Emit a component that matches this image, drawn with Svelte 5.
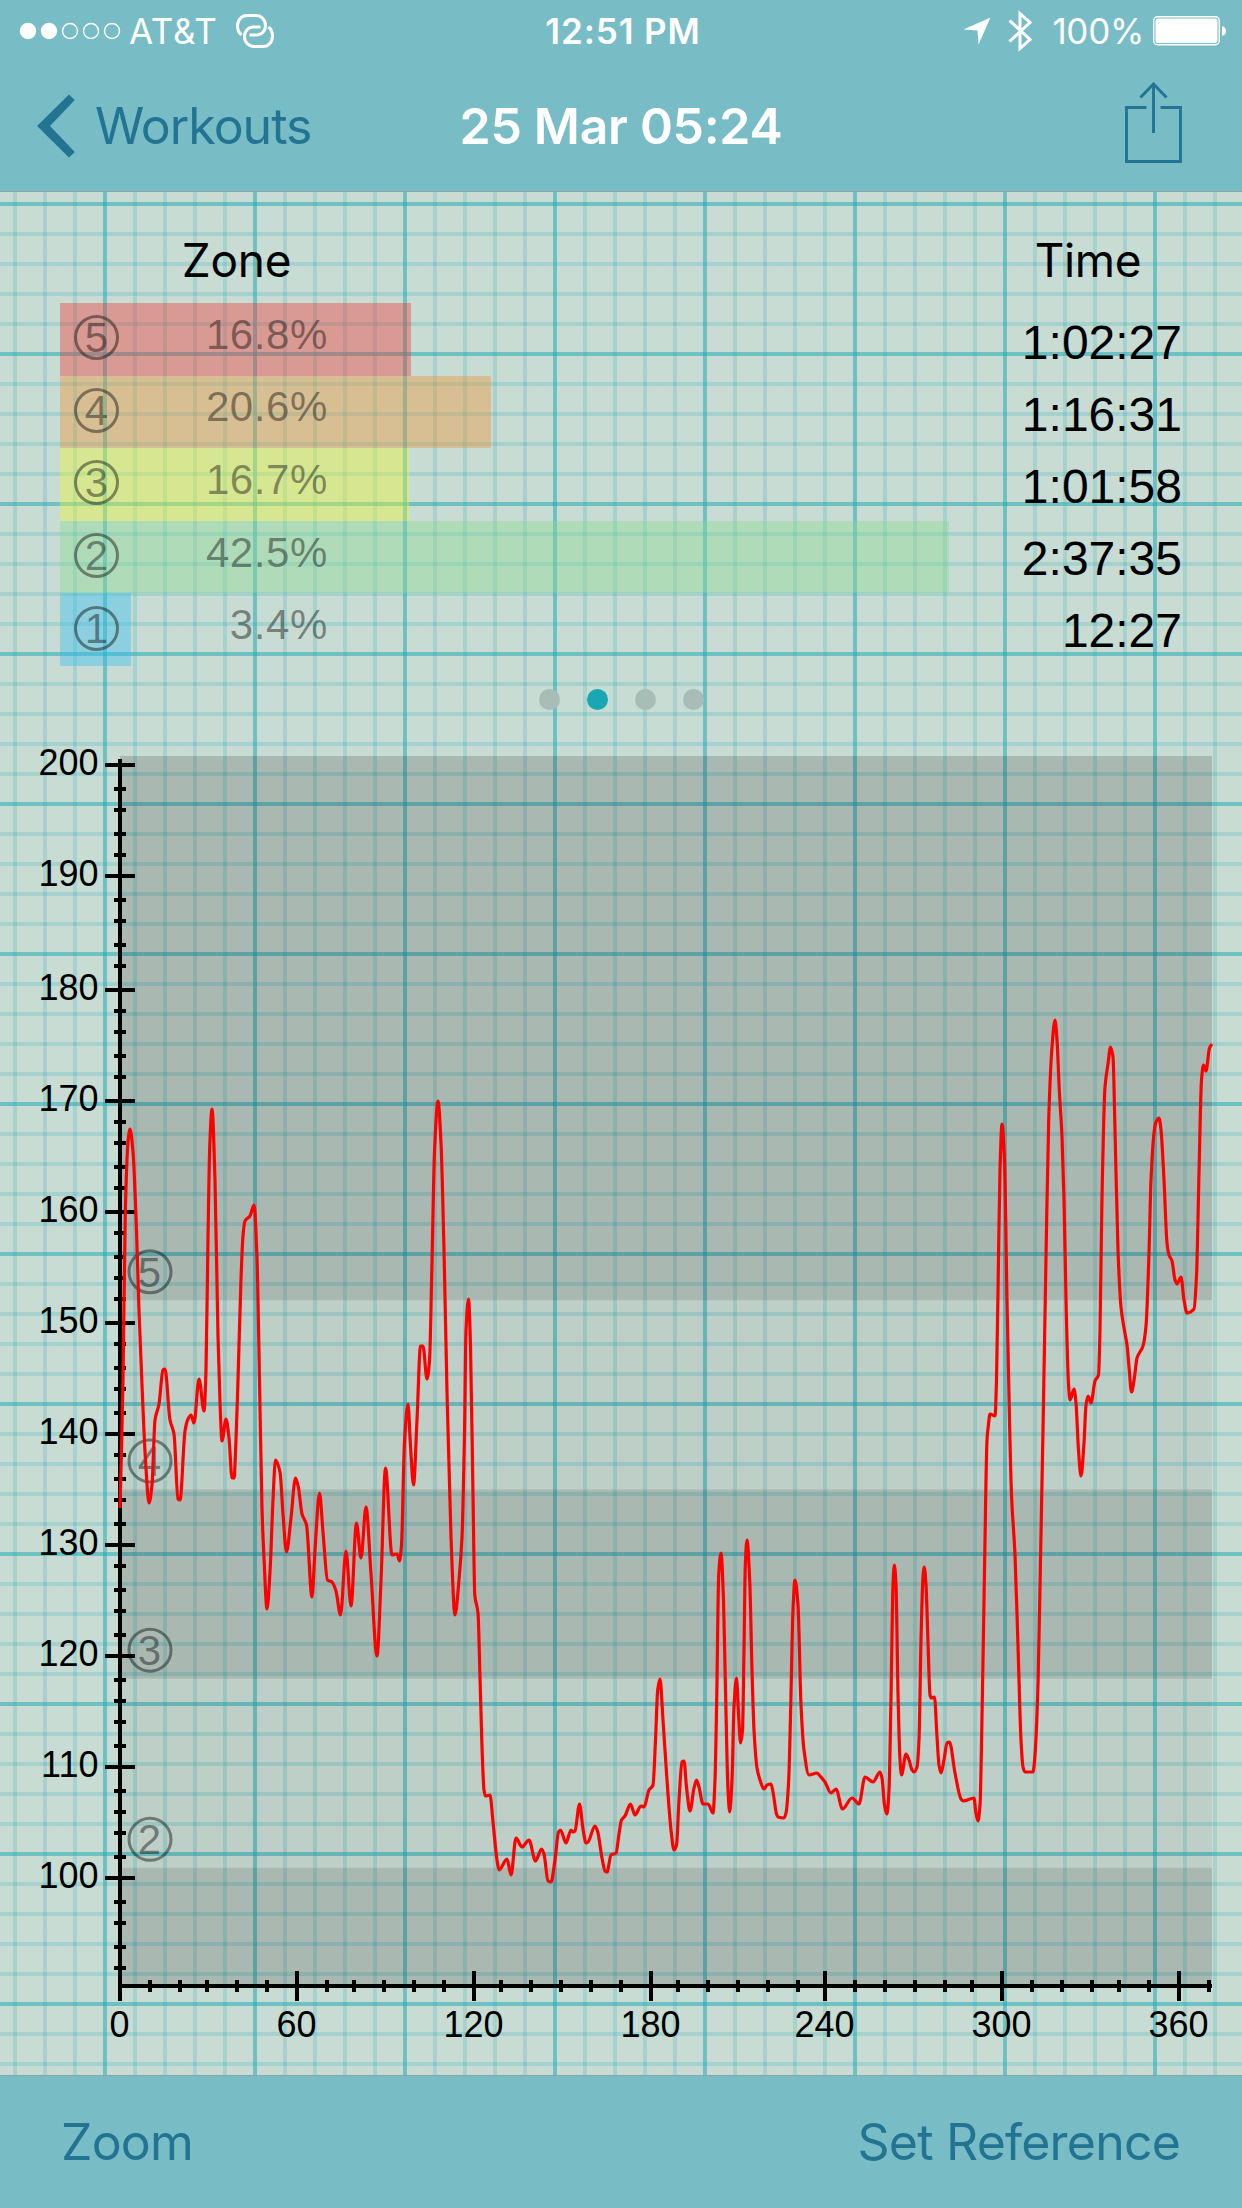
<script lang="ts">
  interface Zone {
    id: number;
    percent: number;
    time: string;
    color: string;
  }

  const zones: Zone[] = [
    { id: 5, percent: 16.8, time: '1:02:27', color: 'red' },
    { id: 4, percent: 20.6, time: '1:16:31', color: 'orange' },
    { id: 3, percent: 16.7, time: '1:01:58', color: 'yellow' },
    { id: 2, percent: 42.5, time: '2:37:35', color: 'green' },
    { id: 1, percent: 3.4, time: '12:27', color: 'blue' }
  ];

  const PX_PER_PERCENT = 20.91;
  const pages = [0, 1, 2, 3];
  let activePage = $state(1);

  // chart geometry
  const LEFT = 120;
  const RIGHT = 1212;
  const BOTTOM = 1986;

  const yOf = (bpm: number) => 766 + (200 - bpm) * 11.13;
  const xOf = (min: number) => LEFT + min * 2.942;
  const snap = (v: number) => Math.round(v / 3) * 3;

  const yTicks = Array.from({ length: 55 }, (_, i) => 200 - i * 2);
  const xTicks = Array.from({ length: 38 }, (_, i) => i * 10);

  const bands = [
    { top: 756, bottom: yOf(152), dark: true, zone: 5 },
    { top: yOf(152), bottom: yOf(135), dark: false, zone: 4 },
    { top: yOf(135), bottom: yOf(118), dark: true, zone: 3 },
    { top: yOf(118), bottom: yOf(101), dark: false, zone: 2 },
    { top: yOf(101), bottom: BOTTOM, dark: true, zone: 0 }
  ];

  // heart rate samples, x y in chart units
  const samples = `
    120 1508 121.5 1450 123 1380 125.3 1213 128 1142 130 1129 133 1152 136.5 1230 139 1311 142 1385 145.5 1460 149 1503
    152 1485 155 1420 159 1404 163 1370 165 1369 170 1420 174 1434 178 1499 180 1500 185 1431 188 1419 191 1415 194 1423
    199 1379 204 1411 206 1370 208 1238 209.8 1145 212 1109 215 1181 218 1336 220 1402 222 1441 226 1419 229 1438
    232 1478 234 1478 236 1440 238 1380 241 1279 243 1236 245 1221 250 1216 254 1205 257 1258 259.5 1380 262 1509
    264 1558 267 1609 270 1572 273 1500 275.5 1460 280 1472 283 1514 286.5 1552 291 1518 295.5 1478 298.5 1488
    302 1514 306.5 1525 312 1597 315 1550 319.5 1493 323 1532 327.5 1580 332 1582 336 1591 340.5 1615 346 1551
    351 1606 356.5 1523 361 1558 366 1507 371 1574 377 1656 381 1581 385.5 1468 392 1555 397 1554 399.5 1561
    401.5 1545 404.5 1442 408 1404 410.5 1446 413.5 1485 417 1420 420.5 1346 423 1346 427 1379 429.5 1361 432 1262
    434.5 1152 438 1101 441 1143 444 1250 447 1392 451 1537 455 1615 459 1580 462 1537 464.5 1434 466 1331 468.5 1299
    470.5 1346 473 1495 474.8 1595 478 1613 480 1677 482 1747 484 1790 485.5 1796 490 1795 493 1822 497 1860 499 1870
    507 1859 511 1875 516 1838 522 1847 529 1840 535.5 1861 541.5 1849 544 1854 548 1881 551 1882 555 1860 558.5 1832
    560.5 1830 566 1843 571 1830 573 1832 575 1831 579.5 1804 583 1829 586 1843 588 1842 595 1826 597.5 1831 602 1858
    605 1871 607 1872 611 1855 616 1853 619 1834 621.5 1820 625 1816 630.5 1804 635 1815 641 1806 644 1807 649 1790
    653 1785 655.5 1740 657.7 1690 660 1679 663 1720 667 1780 671 1830 674 1850 676.5 1845 679 1800 682 1762 684 1761
    686.5 1787 690 1811 694 1788 696.5 1780 699 1787 703 1804 708 1804 713 1813 715 1780 716.7 1700 718.7 1575
    721 1553 723.5 1600 725.5 1690 728 1790 729.7 1812 732 1780 734 1707 736.5 1678 738.5 1713 740.5 1743 742.5 1730
    744 1650 745.3 1565 747 1540 749.7 1580 752 1670 754 1730 757 1768 760 1780 764 1789 767 1785 771 1784 773 1792
    776.5 1814 778 1817 784 1818 786 1813 788.7 1780 790.5 1717 793 1610 795 1580 798 1605 801 1705 804 1750 809 1775
    817 1773 820 1776 825 1782 831 1793 836 1789 842.5 1809 852 1798 859 1804 865 1777 873 1782 880 1772 882 1778
    884.5 1805 887 1814 889 1790 891 1697 893 1585 894.3 1565 896 1585 898 1693 900 1760 901.5 1775 906 1754 909 1760
    912 1770 914 1772 917 1767 919 1740 921 1640 923 1577 924.3 1567 926 1585 928 1642 930 1695 931.5 1698 934.5 1697
    937 1737 939 1765 941 1773 944 1760 947 1743 949.5 1742 955 1773 961 1799 963.5 1801 974 1798 975.8 1812 978 1821
    980 1805 982.3 1701 984.7 1559 987 1440 988.3 1426 990 1414 995 1416 996.5 1380 998.5 1258 1000 1170 1002 1124
    1004.5 1160 1007 1300 1009.5 1420 1011.5 1495 1015 1555 1018 1646 1021 1740 1023 1767 1025 1772 1033 1772
    1035 1755 1038 1685 1040.5 1560 1043 1430 1046 1257 1048.7 1120 1052 1047 1055 1020 1057 1040 1059.3 1090
    1062 1137 1064 1200 1066.3 1313 1068.5 1384 1070 1400 1074 1389 1076 1403 1078.5 1450 1081 1476 1084 1443
    1086 1405 1088 1396 1091 1403 1095 1381 1098.5 1375 1100 1330 1102 1197 1105 1087 1108 1064 1110.5 1047
    1113 1057 1115 1130 1118 1250 1121 1307 1124 1328 1127 1345 1129 1367 1131.5 1392 1134.5 1377 1137 1358
    1143 1346 1146 1326 1149 1253 1151 1180 1154 1133 1156 1122 1159 1118 1161 1130 1164 1180 1167 1243 1169 1255
    1172 1261 1175 1280 1177 1284 1181 1277 1184 1300 1187 1313 1194 1309 1196.5 1276 1199 1173 1201.5 1080
    1203.5 1065 1206 1071 1209.5 1048 1212 1044`;

  // monotone cubic through the samples, so that peaks never overshoot
  function smoothPath(raw: string): string {
    const n = raw.trim().split(/\s+/).map(Number);
    const p: [number, number][] = [];
    for (let i = 0; i < n.length; i += 2) p.push([n[i], n[i + 1]]);

    const slope = p.slice(1).map(([x, y], i) => (y - p[i][1]) / (x - p[i][0]));
    const m = p.map((_, i) => {
      if (i === 0) return slope[0];
      if (i === p.length - 1) return slope[i - 1];
      const a = slope[i - 1];
      const b = slope[i];
      return a * b <= 0 ? 0 : (2 * a * b) / (a + b);
    });

    let d = `M${p[0][0]} ${p[0][1]}`;
    for (let i = 1; i < p.length; i++) {
      const [x0, y0] = p[i - 1];
      const [x1, y1] = p[i];
      const h = (x1 - x0) / 3;
      d += `C${x0 + h} ${y0 + m[i - 1] * h} ${x1 - h} ${y1 - m[i] * h} ${x1} ${y1}`;
    }
    return d;
  }

  const heartRate = smoothPath(samples);
</script>

<div class="screen">
  <header class="top">
    <div class="status">
      <div class="status-left">
        <svg class="signal" width="104" height="18" viewBox="0 0 104 18">
          <circle cx="9" cy="9" r="8.2" fill="#fff" />
          <circle cx="30" cy="9" r="8.2" fill="#fff" />
          <circle cx="51" cy="9" r="7.5" fill="none" stroke="#fff" stroke-width="1.4" />
          <circle cx="72" cy="9" r="7.5" fill="none" stroke="#fff" stroke-width="1.4" />
          <circle cx="93" cy="9" r="7.5" fill="none" stroke="#fff" stroke-width="1.4" />
        </svg>
        <span class="carrier">AT&amp;T</span>
        <svg class="link" width="38" height="34" viewBox="0 0 38 34" fill="none" stroke="#fff" stroke-width="3">
          <path d="M5.500 21C3 19 1.500 16 1.500 12C1.500 6 5.500 1.500 11 1.500H20C25.500 1.500 29.500 6 29.500 11.500C29.500 17 25.500 21 20.500 21H13.500" />
          <path d="M32.500 13C35 15 36.500 18 36.500 22C36.500 28 32.500 32.500 27 32.500H18C12.500 32.500 8.500 28 8.500 22.500C8.500 17 12.500 13 17.500 13H24.500" />
        </svg>
      </div>
      <span class="clock">12:51 PM</span>
      <div class="status-right">
        <svg width="28" height="28" viewBox="0 0 28 28">
          <path d="M27.500 0.500L15.500 27.500L14.500 13.500L0.500 12.500Z" fill="#fff" />
        </svg>
        <svg class="bluetooth" width="24" height="42" viewBox="0 0 24 42" fill="none" stroke="#fff" stroke-width="3">
          <path d="M1.500 10.500L22 29.500L12 38.500V3.500L22 12.500L1.500 31.500" />
        </svg>
        <span class="battery-level">100%</span>
        <svg class="battery" width="74" height="30" viewBox="0 0 74 30">
          <rect x="0.700" y="0.700" width="65.600" height="28" rx="4" fill="none" stroke="#fff" stroke-width="1.400" />
          <rect x="2.500" y="2.400" width="62" height="24.600" rx="2.500" fill="#fff" />
          <path d="M69 10C71.500 10.500 73 12.500 73 14.900S71.500 19.300 69 19.800Z" fill="#fff" />
        </svg>
      </div>
    </div>

    <nav class="navbar">
      <button type="button" class="back">
        <svg width="38" height="64" viewBox="0 0 38 64">
          <path d="M32 0.500L37.800 6L13 32L37.800 58L32 63.500L0 32Z" fill="#237493" />
        </svg>
        <span>Workouts</span>
      </button>
      <h1>25 Mar 05:24</h1>
      <button type="button" class="share" aria-label="Share">
        <svg width="58" height="82" viewBox="0 0 58 82" fill="none" stroke="#237493" stroke-width="2.900">
          <path d="M21.500 25.500H1.500V79.500H55.500V25.500H35.500" />
          <path d="M28.500 51V3" />
          <path d="M15.500 15.500L28.500 2L41.500 15.500" />
        </svg>
      </button>
    </nav>
  </header>

  <main>
    <section class="summary">
      <div class="zones">
        <h2>Zone</h2>
        {#each zones as zone}
          <div class="zone-row">
            <div class="bar {zone.color}" style="width: {zone.percent * PX_PER_PERCENT}px"></div>
            <div class="zone-label">
              <span class="badge">{zone.id}</span>
              <span class="percent">{zone.percent.toFixed(1)}%</span>
            </div>
          </div>
        {/each}
      </div>
      <div class="times">
        <h2>Time</h2>
        {#each zones as zone}
          <div class="time">{zone.time}</div>
        {/each}
      </div>
    </section>

    <div class="pager">
      {#each pages as page}
        <button
          type="button"
          class="dot"
          class:active={page === activePage}
          aria-label="Page {page + 1}"
          onclick={() => (activePage = page)}
        ></button>
      {/each}
    </div>

    <svg class="chart" width="1242" height="1335" viewBox="0 740 1242 1335">
      {#each bands as band}
        <rect
          x={LEFT}
          y={band.top}
          width={RIGHT - LEFT}
          height={band.bottom - band.top}
          class={band.dark ? 'band-dark' : 'band-light'}
        />
      {/each}

      <g class="axis">
        <path d="M{LEFT} 759V2001M{LEFT} {BOTTOM}H{RIGHT}" stroke-width="4" />
        {#each yTicks as bpm}
          {@const y = snap(yOf(bpm))}
          <path d={bpm % 10 === 0 ? `M105 ${y}H135` : `M114 ${y}H126`} stroke-width="4" />
        {/each}
        {#each xTicks as min}
          {@const x = snap(xOf(min))}
          <path d={min % 60 === 0 ? `M${x} 1971V2001` : `M${x} 1980V1992`} stroke-width="4" />
        {/each}
      </g>

      {#each yTicks.filter((t) => t % 10 === 0) as bpm}
        <text class="tick" x="98.500" y={snap(yOf(bpm)) + 10} text-anchor="end">{bpm}</text>
      {/each}
      {#each xTicks.filter((t) => t % 60 === 0) as min}
        <text class="tick" x={snap(xOf(min)) - 0.5} y="2036.5" text-anchor="middle">{min}</text>
      {/each}

      {#each bands.filter((b) => b.zone) as band}
        <g class="zone-mark">
          <circle cx="150" cy={band.bottom - 28.5} r="21" />
          <text x="149.500" y={band.bottom - 13.500} text-anchor="middle">{band.zone}</text>
        </g>
      {/each}

      <path class="heart-rate" d={heartRate} />
    </svg>
  </main>

  <footer class="toolbar">
    <button type="button">Zoom</button>
    <button type="button">Set Reference</button>
  </footer>
</div>

<style>
  :global(body) {
    margin: 0;
  }

  .screen {
    width: 1242px;
    height: 2208px;
    display: flex;
    flex-direction: column;
    overflow: hidden;
    background: #c9dcd3;
    font-family: Inter, 'Liberation Sans', sans-serif;
  }

  button {
    padding: 0;
    border: none;
    background: none;
    font: inherit;
    letter-spacing: inherit;
    color: inherit;
    cursor: pointer;
  }

  svg {
    display: block;
    flex: none;
  }

  h1,
  h2 {
    margin: 0;
  }

  .top {
    box-sizing: border-box;
    height: 192px;
    border-bottom: 1px solid #8aa5a3;
    background: #78bdc5;
    color: #fff;
  }

  .status {
    display: grid;
    grid-template-columns: 1fr auto 1fr;
    align-items: center;
    height: 60px;
    padding: 1px 15px 0 19px;
    box-sizing: border-box;
    font-size: 35px;
    line-height: 60px;
    white-space: nowrap;
  }

  .status-left,
  .status-right {
    display: flex;
    align-items: center;
  }

  .status-right {
    justify-content: flex-end;
  }

  .carrier {
    margin-left: 6px;
    letter-spacing: 0.7px;
  }

  .link {
    margin-left: 18px;
  }

  .clock {
    font-weight: 600;
    letter-spacing: 0.9px;
  }

  .bluetooth {
    margin-left: 17px;
  }

  .battery-level {
    margin-left: 20px;
    letter-spacing: -0.3px;
  }

  .battery {
    margin-left: 9px;
  }

  .navbar {
    display: grid;
    grid-template-columns: 1fr auto 1fr;
    align-items: center;
    height: 131px;
    padding: 0 37px;
    font-size: 50px;
  }

  .back {
    display: flex;
    align-items: center;
    gap: 20px;
    letter-spacing: -1px;
    color: #237493;
  }

  .navbar h1 {
    font-size: 50px;
    font-weight: 600;
    letter-spacing: -0.3px;
  }

  .share {
    justify-self: end;
    margin: -5px 22px 0 0;
  }

  main {
    flex: 1;
    display: flex;
    flex-direction: column;
    --minor: rgba(27, 168, 180, 0.2);
    --major: rgba(27, 168, 180, 0.4);
    background-image:
      linear-gradient(90deg, var(--major) 4px, transparent 4px),
      linear-gradient(var(--major) 4px, transparent 4px),
      linear-gradient(90deg, var(--minor) 4px, transparent 4px),
      linear-gradient(var(--minor) 4px, transparent 4px);
    background-size: 150px 150px, 150px 150px, 30px 30px, 30px 30px;
    background-position: 103px 0, 0 10px, 13px 0, 0 10px;
  }

  .summary {
    display: flex;
    justify-content: space-between;
    height: 474px;
    padding: 0 60px;
  }

  h2 {
    font-size: 46px;
    font-weight: 400;
    line-height: 60px;
    letter-spacing: -0.3px;
    color: #000;
  }

  .zones h2 {
    width: 353px;
    padding: 38px 0 13px;
    text-align: center;
  }

  .times h2 {
    width: 188px;
    padding: 38px 0 17px;
    text-align: center;
  }

  .zone-row {
    display: grid;
    height: 72.6px;
  }

  .bar,
  .zone-label {
    grid-area: 1 / 1;
  }

  .bar.red {
    background: rgba(241, 55, 51, 0.4);
  }

  .bar.orange {
    background: rgba(238, 147, 53, 0.4);
  }

  .bar.yellow {
    background: rgba(238, 245, 48, 0.4);
  }

  .bar.green {
    background: rgba(138, 217, 148, 0.4);
  }

  .bar.blue {
    background: rgba(51, 187, 243, 0.4);
  }

  .zone-label {
    display: flex;
    align-items: center;
    justify-content: space-between;
    width: 254px;
    padding: 0 0 3px 14px;
    font-family: 'Liberation Sans', sans-serif;
    font-size: 42px;
    color: rgba(0, 0, 0, 0.42);
  }

  .badge {
    box-sizing: border-box;
    width: 45px;
    height: 45px;
    border: 3px solid currentColor;
    border-radius: 50%;
    line-height: 39px;
    text-align: center;
  }

  .percent {
    padding-bottom: 6px;
    letter-spacing: 0.6px;
  }

  .times {
    text-align: right;
  }

  .time {
    font-family: 'Liberation Sans', sans-serif;
    font-size: 48px;
    line-height: 72px;
    color: #000;
  }

  .pager {
    display: flex;
    justify-content: center;
    align-items: center;
    gap: 27px;
    height: 74px;
    box-sizing: border-box;
    padding-bottom: 7px;
  }

  .dot {
    width: 21px;
    height: 21px;
    border-radius: 50%;
    background: #a8bdb6;
  }

  .dot.active {
    background: #1aa7b4;
  }

  .band-dark {
    fill: rgba(0, 0, 0, 0.155);
  }

  .band-light {
    fill: rgba(0, 0, 0, 0.06);
  }

  .axis {
    stroke: #000;
    fill: none;
  }

  .tick {
    font-family: 'Liberation Sans', sans-serif;
    font-size: 36px;
  }

  .zone-mark {
    font-family: 'Liberation Sans', sans-serif;
    font-size: 42px;
    fill: rgba(0, 0, 0, 0.42);
  }

  .zone-mark circle {
    fill: none;
    stroke: rgba(0, 0, 0, 0.42);
    stroke-width: 3;
  }

  .heart-rate {
    fill: none;
    stroke: #f00;
    stroke-width: 3.2;
    stroke-linejoin: round;
  }

  .toolbar {
    display: flex;
    align-items: center;
    justify-content: space-between;
    box-sizing: border-box;
    height: 133px;
    padding: 0 62px 0 61px;
    border-top: 1px solid #8aa5a3;
    background: #78bdc5;
    font-size: 50px;
    letter-spacing: -0.8px;
    color: #237493;
  }
</style>
